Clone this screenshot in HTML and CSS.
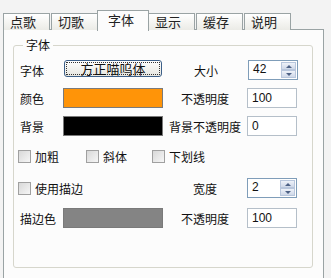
FILE: index.html
```html
<!DOCTYPE html>
<html>
<head>
    <meta charset="utf-8">
    <title>字体设置</title>
    <link rel="stylesheet" href="styles.css">
</head>
<body>
    <div class="window">
        <!-- Tab strip -->
        <div class="tabs">
            <div class="tab">点歌</div>
            <div class="tab">切歌</div>
            <div class="tab active">字体</div>
            <div class="tab">显示</div>
            <div class="tab">缓存</div>
            <div class="tab">说明</div>
        </div>

        <div class="panel">
            <fieldset class="group">
                <legend>字体</legend>

                <div class="row">
                    <span class="label">字体</span>
                    <button class="font-btn"><span>方正喵呜体</span></button>
                    <span class="label2">大小</span>
                    <div class="spin">
                        <span class="value">42</span>
                        <span class="spin-btns">
                            <span class="arrow up"></span>
                            <span class="arrow down"></span>
                        </span>
                    </div>
                </div>

                <div class="row">
                    <span class="label">颜色</span>
                    <span class="swatch orange"></span>
                    <span class="label2">不透明度</span>
                    <div class="field">100</div>
                </div>

                <div class="row">
                    <span class="label">背景</span>
                    <span class="swatch black"></span>
                    <span class="label2">背景不透明度</span>
                    <div class="field">0</div>
                </div>

                <div class="row checks">
                    <label class="check w-bold"><span class="box"></span>加粗</label>
                    <label class="check w-italic"><span class="box"></span>斜体</label>
                    <label class="check"><span class="box"></span>下划线</label>
                </div>

                <div class="row stroke">
                    <label class="check w-stroke"><span class="box"></span>使用描边</label>
                    <span class="label2">宽度</span>
                    <div class="spin">
                        <span class="value">2</span>
                        <span class="spin-btns">
                            <span class="arrow up"></span>
                            <span class="arrow down"></span>
                        </span>
                    </div>
                </div>

                <div class="row last">
                    <span class="label">描边色</span>
                    <span class="swatch gray"></span>
                    <span class="label2">不透明度</span>
                    <div class="field">100</div>
                </div>
            </fieldset>
        </div>
    </div>
</body>
</html>
```

FILE: styles.css
```css
* {
    margin: 0;
    padding: 0;
    box-sizing: border-box;
}
body {
    font-family: "Noto Sans CJK SC", "Noto Sans", sans-serif;
    font-size: 12px;
    color: #111;
    background-color: #f3f3f3;
    overflow: hidden;
}
.window {
    padding: 10px 0 0 3px;
}
/* Tabs */
.tabs {
    display: flex;
    align-items: flex-end;
    height: 20px;
    position: relative;
    z-index: 1;
}
.tab {
    width: 47px;
    height: 17px;
    margin-right: 1px;
    border: 1px solid #9aa3a4;
    border-bottom: none;
    background: linear-gradient(#ffffff, #ebebe6);
    font-size: 13px;
    line-height: 16px;
    padding-left: 6px;
    color: #222;
}
.tab.active {
    width: 52px;
    height: 21px;
    margin: 0 -1px -1px -2px;
    padding-left: 10px;
    line-height: 18px;
    background: #fcfcfc;
}
/* Panel (bottom edge is cut off by the window) */
.panel {
    width: 321px;
    height: 249px;
    margin-top: -1px;
    border: 1px solid #9aa3a4;
    border-bottom: none;
    background-color: #fcfcfc;
    padding: 8px 10px 0 9px;
}
.group {
    border: 1px solid #d6d6cc;
    border-radius: 3px;
    padding: 8px 0 40px 6px;
    height: 230px;
}
.group legend {
    margin-left: 3px;
    padding: 0 3px;
    line-height: 14px;
}
/* Rows */
.row {
    display: flex;
    align-items: center;
    height: 20px;
    margin-top: 8px;
}
.row:first-of-type {
    margin-top: 0;
}
.row.checks {
    margin-top: 10px;
    margin-left: -2px;
}
.row.stroke {
    margin-top: 12px;
    margin-left: -2px;
}
.row.last {
    margin-top: 10px;
}
.label {
    width: 43px;
}
.label2 {
    width: 84px;
    text-align: center;
}
.row.stroke .label2 {
    margin-left: 78px;
}
.swatch {
    width: 100px;
    height: 20px;
    border: 1px solid #7a7a7a;
}
.swatch.orange {
    background-color: #ff9408;
}
.swatch.black {
    background-color: #000;
}
.swatch.gray {
    background-color: #848484;
}
.font-btn {
    width: 98px;
    height: 17px;
    margin: -3px 2px 0 1px;
    border: 1px solid #3c5f88;
    border-radius: 3px;
    background: linear-gradient(#ffffff, #e6e6e0);
    font-family: inherit;
    font-size: 13px;
    color: #111;
    padding: 1px;
}
.font-btn span {
    display: block;
    height: 13px;
    line-height: 12px;
    border: 1px dotted #333;
}
.field,
.spin {
    width: 50px;
    height: 20px;
    border: 1px solid #b5bfc9;
    background-color: #fff;
    padding: 1px 0 0 4px;
    line-height: 16px;
    font-size: 12px;
    font-family: "Liberation Sans", sans-serif;
}
.spin {
    position: relative;
    border-color: #7f9db9;
    padding-top: 0;
}
.spin-btns {
    position: absolute;
    right: 1px;
    top: 1px;
    width: 15px;
    height: 16px;
    display: flex;
    flex-direction: column;
}
.arrow {
    flex: 1;
    border: 1px solid #b8c6dc;
    background: linear-gradient(#eef2f9, #cfd8e8);
    position: relative;
}
.arrow::after {
    content: "";
    position: absolute;
    left: 4px;
    top: 2px;
    border-left: 3px solid transparent;
    border-right: 3px solid transparent;
}
.arrow.up::after {
    border-bottom: 3px solid #4d6185;
}
.arrow.down::after {
    border-top: 3px solid #4d6185;
}
/* Checkboxes */
.check {
    display: flex;
    align-items: center;
}
.check .box {
    width: 13px;
    height: 13px;
    border: 1px solid #a0a0a0;
    background: linear-gradient(135deg, #d8d8d8, #f6f6f6);
    margin-right: 4px;
}
.w-bold {
    width: 68px;
}
.w-italic {
    width: 66px;
}
.w-stroke {
    width: 67px;
}
```
